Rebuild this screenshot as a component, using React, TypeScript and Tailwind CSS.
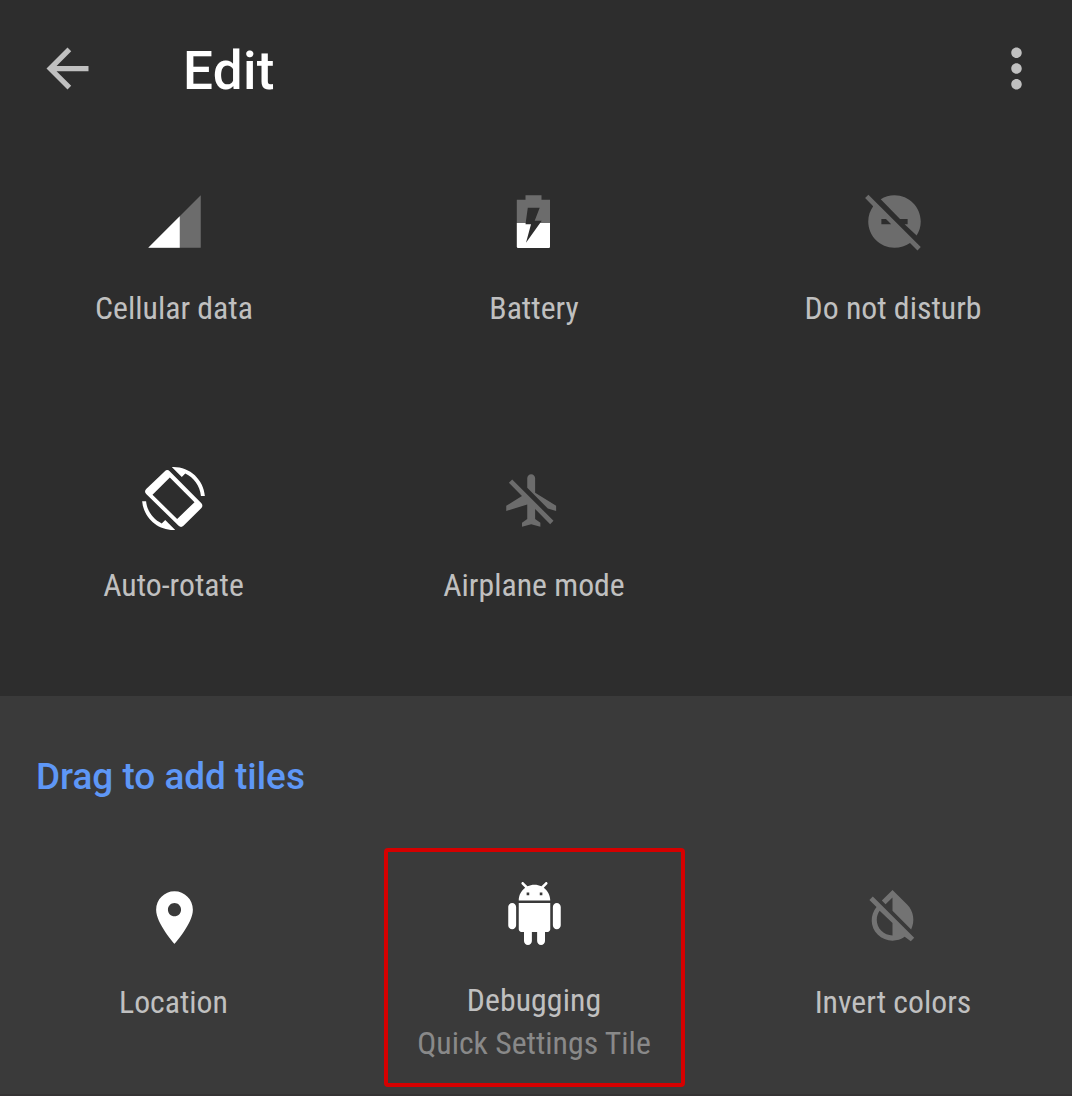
import type { ReactNode } from "react";

function Icon({ children, className = "", box = "0 0 24 24" }: { children: ReactNode; className?: string; box?: string }) {
  return (
    <svg viewBox={box} className={`block size-[63px] shrink-0 fill-current ${className}`} aria-hidden="true">
      {children}
    </svg>
  );
}

function Label({ children, className = "text-[#c0c0c0]" }: { children: ReactNode; className?: string }) {
  return (
    <span
      className={`whitespace-nowrap font-['Roboto_Condensed',Roboto,sans-serif] text-[31.75px] leading-[37px] [font-stretch:75%] ${className}`}
    >
      {children}
    </span>
  );
}

function Tile({ icon, label, className = "" }: { icon: ReactNode; label: string; className?: string }) {
  return (
    <div className={`flex flex-col items-center ${className}`}>
      {icon}
      <Label>{label}</Label>
    </div>
  );
}

export default function App() {
  return (
    <div className="flex h-[1096px] w-[1072px] flex-col overflow-hidden bg-[#2d2d2d] font-[Roboto,sans-serif]">
      <header className="mb-0.5 flex h-[136px] shrink-0 items-center pl-9 pr-6 text-[#c0c0c0]">
        <Icon>
          <path d="M20 11H7.83l5.59-5.59L12 4l-8 8 8 8 1.41-1.41L7.83 13H20v-2z" />
        </Icon>
        <h1 className="ml-[84px] mt-1.5 text-[53px] font-medium leading-[62px] tracking-[0.3px] text-white">Edit</h1>
        <Icon className="ml-auto">
          <path d="M12 8c1.1 0 2-.9 2-2s-.9-2-2-2-2 .9-2 2 .9 2 2 2zm0 2c-1.1 0-2 .9-2 2s.9 2 2 2 2-.9 2-2-.9-2-2-2zm0 6c-1.1 0-2 .9-2 2s.9 2 2 2 2-.9 2-2-.9-2-2-2z" />
        </Icon>
      </header>

      <section className="grid h-[558px] shrink-0 grid-cols-[348px_372px_346px] grid-rows-[277px_281px]">
        <Tile
          className="gap-[37px] pt-[52px]"
          label="Cellular data"
          icon={
            <Icon className="text-white">
              <path fill="#6c6c6c" d="M2 22h20V2z" />
              <path d="M14 10L2 22h12z" />
            </Icon>
          }
        />
        <Tile
          className="gap-[37px] pt-[52px]"
          label="Battery"
          icon={
            <Icon box="0 0 63 63" className="text-white">
              <path fill="#6c6c6c" d="M13.8 33V9.7H22.5V5.3h16v4.4H47V33z" />
              <path d="M13.8 33H47v23.7q0 1.3-1.3 1.3H15.1q-1.3 0-1.3-1.3z" />
              <path fill="#2d2d2d" d="M24.8 17.7h11.9L31.7 30.7h7L23 52.7 28 34.3h-5.5z" />
            </Icon>
          }
        />
        <Tile
          className="gap-[37px] pt-[52px]"
          label="Do not disturb"
          icon={
            <Icon className="ml-[2px] text-[#6c6c6c]">
              <path d="M17 11v2h-1.16l4.6 4.36C21.43 15.8 22 13.97 22 12c0-5.52-4.48-10-10-10-1.93 0-3.73.55-5.25 1.5L14.1 11H17zM2.05 1.8L.8 3.05l3.08 3.12C2.7 7.8 2 9.8 2 12c0 5.52 4.48 10 10 10 2.2 0 4.25-.68 5.9-1.85L20.75 23 22 21.75 2.05 1.8zM7 13v-2h1.76l2 2H7z" />
            </Icon>
          }
        />
        <Tile
          className="gap-[37px] pr-px pt-[52px]"
          label="Auto-rotate"
          icon={
            <Icon>
              <path
                fill="#fff"
                fillRule="evenodd"
                d="M16.48 2.52c3.27 1.55 5.61 4.72 5.97 8.48h1.5C23.44 4.84 18.29 0 12 0l-.66.03 3.81 3.81 1.33-1.32zM7.52 21.48C4.25 19.94 1.91 16.76 1.55 13H.05C.56 19.16 5.71 24 12 24l.66-.03-3.81-3.81-1.33 1.32zM10.55 1.6c-.55-.55-1.3-.55-1.85 0L1.6 8.35c-.6.58-.6 1.35 0 1.95L13.95 22.4c.55.55 1.3.55 1.85 0l6.75-6.7c.6-.6.6-1.35 0-1.95L10.55 1.6zM10.6 4L4 10.6l9.4 9.2 6.6-6.4L10.6 4z"
              />
            </Icon>
          }
        />
        <Tile
          className="gap-[37px] pt-[52px]"
          label="Airplane mode"
          icon={
            <Icon className="-mb-[2px] mr-[3px] mt-[2px] text-[#6c6c6c]">
              <path d="M13 9V3.5c0-.83-.67-1.5-1.5-1.5S10 2.67 10 3.5v3.68l7.83 7.83L21 16v-2l-8-5zM3 5.27l4.99 4.99L2 14v2l8-2.5V19l-2 1.5V22l3.5-1 3.5 1v-1.5L13 19v-3.73L18.73 21 20 19.73 4.27 4 3 5.27z" />
            </Icon>
          }
        />
      </section>

      <section className="flex h-[400px] shrink-0 flex-col border-b-2 border-[#353334] bg-[#3a3a3a]">
        <h2 className="ml-9 mt-[59px] text-[36.9px] font-medium leading-[43px] text-[#5e97f6]">Drag to add tiles</h2>
        <div className="mt-[50px] grid grid-cols-[348px_372px_346px]">
          <Tile
            className="gap-[35px] pr-px pt-[38px]"
            label="Location"
            icon={
              <Icon className="ml-px text-white">
                <path d="M12 2C8.13 2 5 5.13 5 9c0 5.25 7 13 7 13s7-7.75 7-13c0-3.87-3.13-7-7-7zm0 9.5c-1.38 0-2.5-1.12-2.5-2.5s1.12-2.5 2.5-2.5 2.5 1.12 2.5 2.5-1.12 2.5-2.5 2.5z" />
              </Icon>
            }
          />
          <div className="ml-9 flex h-[239px] w-[301px] flex-col items-center rounded-[4px] border-4 border-[#d50000] pt-[30px]">
            <Icon className="text-white">
              <path d="M6 18c0 .55.45 1 1 1h1v3.5c0 .83.67 1.5 1.5 1.5s1.5-.67 1.5-1.5V19h2v3.5c0 .83.67 1.5 1.5 1.5s1.5-.67 1.5-1.5V19h1c.55 0 1-.45 1-1V8H6v10zM3.5 8C2.67 8 2 8.67 2 9.5v7c0 .83.67 1.5 1.5 1.5S5 17.33 5 16.5v-7C5 8.67 4.33 8 3.5 8zm17 0c-.83 0-1.5.67-1.5 1.5v7c0 .83.67 1.5 1.5 1.5s1.5-.67 1.5-1.5v-7c0-.83-.67-1.5-1.5-1.5zm-4.97-5.84l1.3-1.3c.2-.2.2-.51 0-.71-.2-.2-.51-.2-.71 0l-1.48 1.48C13.85 1.23 12.95 1 12 1c-.96 0-1.86.23-2.66.63L7.85.15c-.2-.2-.51-.2-.71 0-.2.2-.2.51 0 .71l1.31 1.31C6.97 3.26 6 5.01 6 7h12c0-1.99-.97-3.75-2.47-4.84zM10 5H9V4h1v1zm5 0h-1V4h1v1z" />
            </Icon>
            <div className="mr-px mt-[37px] flex flex-col items-center gap-1.5">
              <Label className="tracking-[0.1px] text-[#c0c0c0]">Debugging</Label>
              <Label className="text-[#898989]">Quick Settings Tile</Label>
            </div>
          </div>
          <Tile
            className="gap-[35px] pt-[38px]"
            label="Invert colors"
            icon={
              <Icon className="-mt-[2px] mb-[2px] mr-px text-[#737373]">
                <path d="M4.5 4.75L3.2 6.05l2.7 2.7c-2.5 3.14-2.48 7.56.44 10.49C7.9 20.8 9.95 21.58 12 21.58c1.63 0 3.26-.49 4.64-1.47L18.97 21.8 20.27 20.5zM12 19.59c-1.6 0-3.11-.62-4.24-1.76C6.62 16.69 6 15.19 6 13.59c0-1.25.4-2.4 1.1-3.4L12 14.9v4.69zM12 5.1v5.1l7.1 7.1c1.5-2.96.99-6.93-1.45-9.37L12 2.27 7.95 6.32l1.41 1.41L12 5.1z" />
              </Icon>
            }
          />
        </div>
      </section>
    </div>
  );
}
